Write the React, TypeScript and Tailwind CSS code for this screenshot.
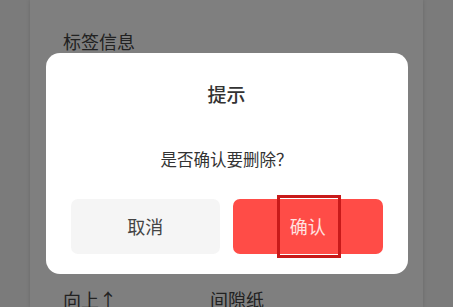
// Delete-confirmation dialog over a dimmed settings page.

const cjk = { fontFamily: '"Noto Sans CJK SC", "Noto Sans", sans-serif' };

function App() {
  return (
    <div className="relative h-[307px] w-[453px] overflow-hidden bg-[#f6f6f6]" style={cjk}>
      {/* Page underneath */}
      <div className="mx-[30px] flex h-full flex-col bg-white px-[33px] shadow-[0_0_4px_rgba(0,0,0,0.15)]">
        <div className="pt-[29px] text-[18px] leading-[24px] text-[#444]">标签信息</div>
        <div className="flex-1" />
        <div className="flex -mb-[4px] text-[18px] leading-[24px] text-[#444]">
          <span className="w-[147px]">向上↑</span>
          <span>间隙纸</span>
        </div>
      </div>

      {/* Mask + dialog */}
      <div className="absolute inset-0 flex justify-center bg-black/50 pt-[53px]">
        <div className="flex h-[221px] w-[362px] flex-col items-center rounded-[14px] bg-white px-[25px] pt-[28px]">
          <div className="text-[19px] font-medium leading-[26px] text-[#333]">提示</div>
          <div className="mt-[41px] text-[16.5px] leading-[22px] text-[#333]">是否确认要删除？</div>
          <div className="mt-[29px] flex w-full gap-[13px]">
            <button className="flex h-[55px] flex-1 items-center justify-center rounded-[7px] bg-[#f5f5f5] text-[18px] text-[#444]">
              取消
            </button>
            <button className="relative flex h-[55px] flex-1 items-center justify-center rounded-[7px] bg-[#ff4c47] text-[18px] text-[#ffe2e0]">
              确认
              <span className="absolute left-[44px] top-[-4px] h-[63px] w-[64px] border-[3px] border-[#c81a1a]" />
            </button>
          </div>
        </div>
      </div>
    </div>
  );
}

export default App;
